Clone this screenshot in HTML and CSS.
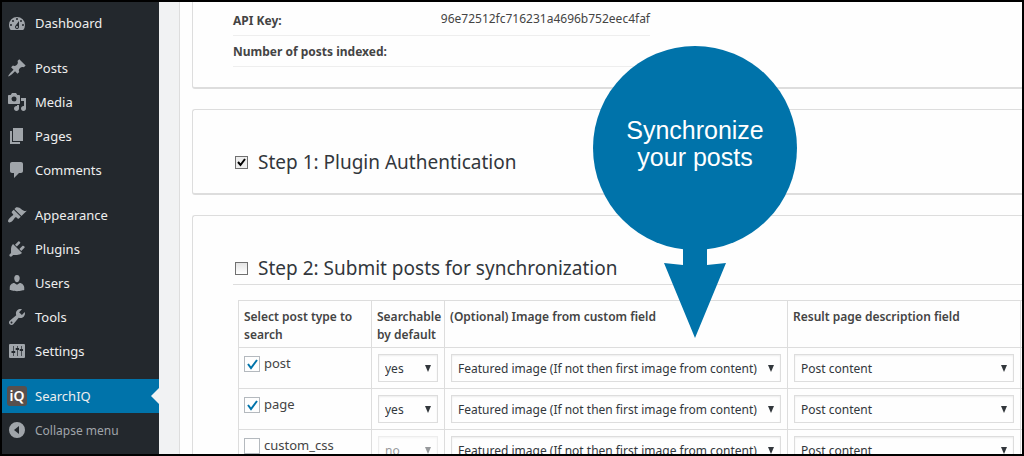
FILE: index.html
```html
<!DOCTYPE html>
<html lang="en">
<head>
    <meta charset="UTF-8">
    <meta name="viewport" content="width=device-width, initial-scale=1.0">
    <title>SearchIQ</title>
    <link rel="stylesheet" href="styles.css">
</head>
<body>
    <nav class="menu">
        <ul>
            <li><a href="#"><svg viewBox="0 0 20 20"><path fill-rule="evenodd" d="M3.76 17h12.48A8 8 0 0 0 18 12a8 8 0 0 0-16 0c0 1.9.66 3.64 1.76 5zM10 5a1 1 0 1 1 0 2 1 1 0 0 1 0-2zM6 7a1 1 0 1 1 0 2 1 1 0 0 1 0-2zm8 0a1 1 0 1 1 0 2 1 1 0 0 1 0-2zm-5.37 5.55L12 8v6a2 2 0 1 1-3.37-1.45zM4 11a1 1 0 1 1 0 2 1 1 0 0 1 0-2zm12 0a1 1 0 1 1 0 2 1 1 0 0 1 0-2zm-5 3a1 1 0 1 0-2 0 1 1 0 0 0 2 0z"/></svg>Dashboard</a></li>
            <li class="first"><a href="#"><svg viewBox="0 0 20 20"><path d="M10.44 3.02l1.82-1.82 6.36 6.35-1.83 1.82c-1.05-.68-2.48-.57-3.41.36l-.75.75c-.92.93-1.04 2.35-.35 3.41l-1.83 1.82-2.41-2.41-2.8 2.79c-.42.42-3.38 2.71-3.8 2.29s1.86-3.39 2.28-3.81l2.79-2.79L4.1 9.36l1.83-1.82c1.05.69 2.48.57 3.4-.36l.75-.75c.93-.92 1.05-2.35.36-3.41z"/></svg>Posts</a></li>
            <li><a href="#"><svg viewBox="0 0 20 20"><path fill-rule="evenodd" d="M13 11V4c0-.55-.45-1-1-1h-1.67L9 1H5L3.67 3H2c-.55 0-1 .45-1 1v7c0 .55.45 1 1 1h10c.55 0 1-.45 1-1zM7 4.5a2.5 2.5 0 1 1 0 5 2.5 2.5 0 0 1 0-5zM14 6h5v10.5c0 1.38-1.12 2.5-2.5 2.5S14 17.88 14 16.5s1.12-2.5 2.5-2.5c.17 0 .34.02.5.05V9h-3V6zm-4 8.05V13h2v3.5c0 1.38-1.12 2.5-2.5 2.5S7 17.88 7 16.5 8.12 14 9.5 14c.17 0 .34.02.5.05z"/></svg>Media</a></li>
            <li><a href="#"><svg viewBox="0 0 20 20"><path d="M6 15V2h10v13H6zm-1 1h8v2H3V5h2v11z"/></svg>Pages</a></li>
            <li><a href="#"><svg viewBox="0 0 20 20"><path d="M5 2h9c1.1 0 2 .9 2 2v7c0 1.1-.9 2-2 2h-2l-5 5v-5H5c-1.1 0-2-.9-2-2V4c0-1.1.9-2 2-2z"/></svg>Comments</a></li>
            <li class="first"><a href="#"><svg viewBox="0 0 20 20"><path d="M14.48 11.06L7.41 3.99l1.5-1.5c.5-.56 2.3-.47 3.51.32 1.21.8 1.43 1.28 2.91 2.1 1.18.64 2.45 1.26 4.45.85zm-.71.71L6.7 4.7 4.93 6.47c-.39.39-.39 1.02 0 1.41l1.06 1.06c.39.39.39 1.03 0 1.42-.6.6-1.43 1.11-2.21 1.69-.35.26-.7.53-1.01.84C1.43 14.23.4 16.08 1.4 17.07c.99 1 2.84-.03 4.18-1.36.31-.31.58-.66.85-1.02.57-.78 1.08-1.61 1.69-2.21.39-.39 1.02-.39 1.41 0l1.06 1.06c.39.39 1.02.39 1.41 0z"/></svg>Appearance</a></li>
            <li><a href="#"><svg viewBox="0 0 20 20"><path d="M13.11 4.36L9.87 7.6 8 5.73l3.24-3.24c.35-.34 1.05-.2 1.56.32.52.51.66 1.21.31 1.55zm-8 1.77l.91-1.12 9.01 9.01-1.19.84c-.71.71-2.63 1.16-3.82 1.16H6.14L4.9 17.26c-.59.59-1.54.59-2.12 0-.59-.58-.59-1.53 0-2.12l1.24-1.24v-3.88c0-1.13.4-3.19 1.09-3.89zm7.26 3.97l3.24-3.24c.34-.35 1.04-.21 1.55.31.52.51.66 1.21.31 1.55l-3.24 3.25z"/></svg>Plugins</a></li>
            <li><a href="#"><svg viewBox="0 0 20 20"><path d="M10 9.25c-2.27 0-2.73-3.44-2.73-3.44C7 4.02 7.82 2 9.97 2c2.16 0 2.98 2.02 2.71 3.81 0 0-.41 3.44-2.68 3.44zm0 2.57L12.72 10c2.39 0 4.52 2.33 4.52 4.53v2.49s-3.65 1.13-7.24 1.13c-3.65 0-7.24-1.13-7.24-1.13v-2.49c0-2.25 1.94-4.48 4.47-4.48z"/></svg>Users</a></li>
            <li><a href="#"><svg viewBox="0 0 20 20"><path fill-rule="evenodd" d="M16.68 9.77c-1.34 1.34-3.3 1.67-4.95.99l-5.41 6.52c-.99.99-2.59.99-3.58 0s-.99-2.59 0-3.57l6.52-5.42c-.68-1.65-.35-3.61.99-4.95 1.28-1.28 3.12-1.62 4.72-1.06l-2.89 2.89 2.82 2.82 2.86-2.87c.53 1.58.18 3.39-1.08 4.65zM3.81 16.21c.4.39 1.04.39 1.43 0 .4-.4.4-1.04 0-1.43-.39-.4-1.03-.4-1.43 0-.39.39-.39 1.03 0 1.43z"/></svg>Tools</a></li>
            <li><a href="#"><svg viewBox="0 0 20 20"><path fill-rule="evenodd" d="M3 3h14a1 1 0 0 1 1 1v12a1 1 0 0 1-1 1H3a1 1 0 0 1-1-1V4a1 1 0 0 1 1-1zM6 5v5H4.5v2H6v3h.7v-3h1.5v-2H6.700V5zM10 5v2H8.700v2H10v6h.7V9H12V7h-1.300V5zM14 5v3h-1.300v2H14v5h.7v-5H16V8h-1.300V5z"/></svg>Settings</a></li>
            <li class="first current"><a href="#"><span class="logo">iQ</span>SearchIQ</a></li>
            <li><button type="button"><svg viewBox="0 0 20 20"><path fill-rule="evenodd" d="M10 2a8 8 0 1 1 0 16 8 8 0 0 1 0-16zM12 6l-5 4 5 4z"/></svg>Collapse menu</button></li>
        </ul>
    </nav>

    <main class="content">
        <section class="panel details">
            <dl>
                <div><dt>API Key:</dt><dd>96e72512fc716231a4696b752eec4faf</dd></div>
                <div><dt>Number of posts indexed:</dt><dd></dd></div>
            </dl>
        </section>

        <section class="panel step">
            <h2><input type="checkbox" id="step1" checked><label for="step1">Step 1: Plugin Authentication</label></h2>
        </section>

        <section class="panel step sync">
            <h2><input type="checkbox" id="step2"><label for="step2">Step 2: Submit posts for synchronization</label></h2>
            <table>
                <colgroup>
                    <col class="col-type">
                    <col class="col-search">
                    <col class="col-image">
                    <col class="col-desc">
                    <col>
                </colgroup>
                <thead>
                    <tr>
                        <th>Select post type to search</th>
                        <th>Searchable by default</th>
                        <th>(Optional) Image from custom field</th>
                        <th>Result page description field</th>
                        <th></th>
                    </tr>
                </thead>
                <tbody>
                    <tr>
                        <td><label class="type"><input type="checkbox" checked>post</label></td>
                        <td><select aria-label="Searchable by default"><option>yes</option><option>no</option></select></td>
                        <td><select aria-label="Image from custom field"><option>Featured image (If not then first image from content)</option></select></td>
                        <td><select aria-label="Result page description field"><option>Post content</option></select></td>
                        <td></td>
                    </tr>
                    <tr>
                        <td><label class="type"><input type="checkbox" checked>page</label></td>
                        <td><select aria-label="Searchable by default"><option>yes</option><option>no</option></select></td>
                        <td><select aria-label="Image from custom field"><option>Featured image (If not then first image from content)</option></select></td>
                        <td><select aria-label="Result page description field"><option>Post content</option></select></td>
                        <td></td>
                    </tr>
                    <tr>
                        <td><label class="type"><input type="checkbox">custom_css</label></td>
                        <td><select aria-label="Searchable by default" disabled><option>no</option></select></td>
                        <td><select aria-label="Image from custom field"><option>Featured image (If not then first image from content)</option></select></td>
                        <td><select aria-label="Result page description field"><option>Post content</option></select></td>
                        <td></td>
                    </tr>
                </tbody>
            </table>
        </section>
    </main>

    <div class="callout">
        <svg viewBox="0 0 204 292"><circle cx="102" cy="102" r="102"/><path d="M90 195h24v24l19-2-31 75-31-75 19 2z"/></svg>
        <p>Synchronize<br>your posts</p>
    </div>
</body>
</html>
```

FILE: styles.css
```css
* {
    box-sizing: border-box;
}
body {
    position: relative;
    display: flex;
    height: 100vh;
    margin: 0;
    border: 2px solid #000;
    overflow: hidden;
    background-color: #fefefe;
    color: #444;
    font-family: "Noto Sans", "Open Sans", sans-serif;
    font-size: 12px;
}

/* admin menu */
.menu {
    flex: none;
    width: 157px;
    background-color: #23282d;
}
.menu ul {
    margin: 0;
    padding: 4px 0 0;
    list-style: none;
}
.menu .first {
    margin-top: 11px;
}
.menu a,
.menu button {
    display: flex;
    align-items: center;
    gap: 8px;
    width: 100%;
    height: 34px;
    padding: 0 5px;
    border: none;
    background: none;
    color: #eee;
    font-family: inherit;
    font-size: 13px;
    text-decoration: none;
    cursor: pointer;
}
.menu button {
    color: #a0a5aa;
    font-size: 12px;
}
.menu svg {
    width: 20px;
    height: 20px;
    fill: #a0a5aa;
}
.menu .current {
    position: relative;
    background-color: #0073aa;
}
.menu .current::after {
    content: "";
    position: absolute;
    top: 9px;
    right: 0;
    border: 8px solid transparent;
    border-left: none;
    border-right-color: #f1f2f3;
}
.logo {
    width: 20px;
    height: 20px;
    border-radius: 3px;
    background-color: #58504e;
    color: #fff;
    font-size: 14px;
    font-weight: 600;
    line-height: 20px;
    text-align: center;
}

/* settings panels */
.content {
    flex: 1;
    min-width: 0;
    border-left: 20px solid #f1f2f3;
    box-shadow: inset 1px 0 #ddd;
    padding-left: 13px;
}
.panel {
    margin-bottom: 20px;
    padding: 0 0 0 40px;
    border: 1px solid #ddd;
    border-right: none;
    border-bottom-width: 2px;
    border-radius: 3px 0 0 3px;
}
.details {
    padding: 3px 0 20px 40px;
    border-top: none;
    border-top-left-radius: 0;
}
.details dl {
    width: 417px;
    margin: 0;
}
.details dl div {
    display: flex;
    justify-content: space-between;
    height: 31px;
    border-bottom: 1px solid #eee;
    line-height: 32px;
}
.details dt {
    font-weight: 700;
}
.details dd {
    margin: 0;
    line-height: 28px;
}
.step h2 {
    display: flex;
    align-items: center;
    gap: 10px;
    height: 32px;
    margin: 36px 0 15px;
    color: #32373c;
    font-size: 19px;
    font-weight: 400;
}
.step h2 input {
    appearance: none;
    width: 13px;
    height: 13px;
    margin: 0 0 0 2px;
    border: 1px solid #707070;
    background: linear-gradient(#e4e4e4, #fff);
}
.step h2 input:checked {
    background: url("data:image/svg+xml,%3Csvg xmlns='http://www.w3.org/2000/svg' viewBox='0 0 11 11'%3E%3Cpath d='M2 5l2.5 3L9 2' fill='none' stroke='%23000' stroke-width='2'/%3E%3C/svg%3E") #eee;
}
.sync h2 {
    height: 33px;
    border-bottom: 1px solid #ddd;
}

/* post types */
table {
    width: 100%;
    margin-left: 5px;
    table-layout: fixed;
    border-collapse: collapse;
}
.col-type {
    width: 133px;
}
.col-search {
    width: 73px;
}
.col-image {
    width: 343px;
}
.col-desc {
    width: 233px;
}
th, td {
    border: 1px solid #ddd;
    vertical-align: top;
    text-align: left;
}
th {
    height: 47px;
    padding: 7px 0 3px 5px;
    font-weight: 600;
    line-height: 18px;
}
td {
    height: 41px;
    padding: 6px 6px 6px 5px;
}
td + td {
    padding-left: 6px;
}
.type {
    display: flex;
    gap: 4px;
    font-size: 13px;
    line-height: 18px;
}
.type input {
    appearance: none;
    width: 16px;
    height: 16px;
    margin: 2px 0 0;
    border: 1px solid #b4b9be;
}
.type input:checked {
    background: url("data:image/svg+xml,%3Csvg xmlns='http://www.w3.org/2000/svg' viewBox='0 0 14 14'%3E%3Cpath d='M3 7l3 4 6-8' fill='none' stroke='%230073aa' stroke-width='2'/%3E%3C/svg%3E");
}
select {
    appearance: none;
    display: block;
    width: 100%;
    height: 28px;
    padding: 0 6px;
    border: 1px solid #ddd;
    border-radius: 0;
    background: url("data:image/svg+xml,%3Csvg xmlns='http://www.w3.org/2000/svg' width='6' height='7'%3E%3Cpath d='M0 0h6L3 7z' fill='%2332373c'/%3E%3C/svg%3E") no-repeat right 6px top 10px;
    box-shadow: inset 0 1px 2px rgba(0, 0, 0, 0.07);
    color: #32373c;
    font-family: inherit;
    font-size: 12px;
}
select:disabled {
    opacity: 0.5;
}

/* pointer over the panels */
.callout {
    position: absolute;
    top: 44px;
    left: 591px;
    width: 204px;
    color: #fff;
    font-family: "Liberation Sans", Arial, sans-serif;
    font-size: 25px;
    line-height: 27px;
    text-align: center;
}
.callout svg {
    display: block;
    fill: #0073aa;
}
.callout p {
    position: absolute;
    top: 71px;
    width: 100%;
    margin: 0;
}
```
